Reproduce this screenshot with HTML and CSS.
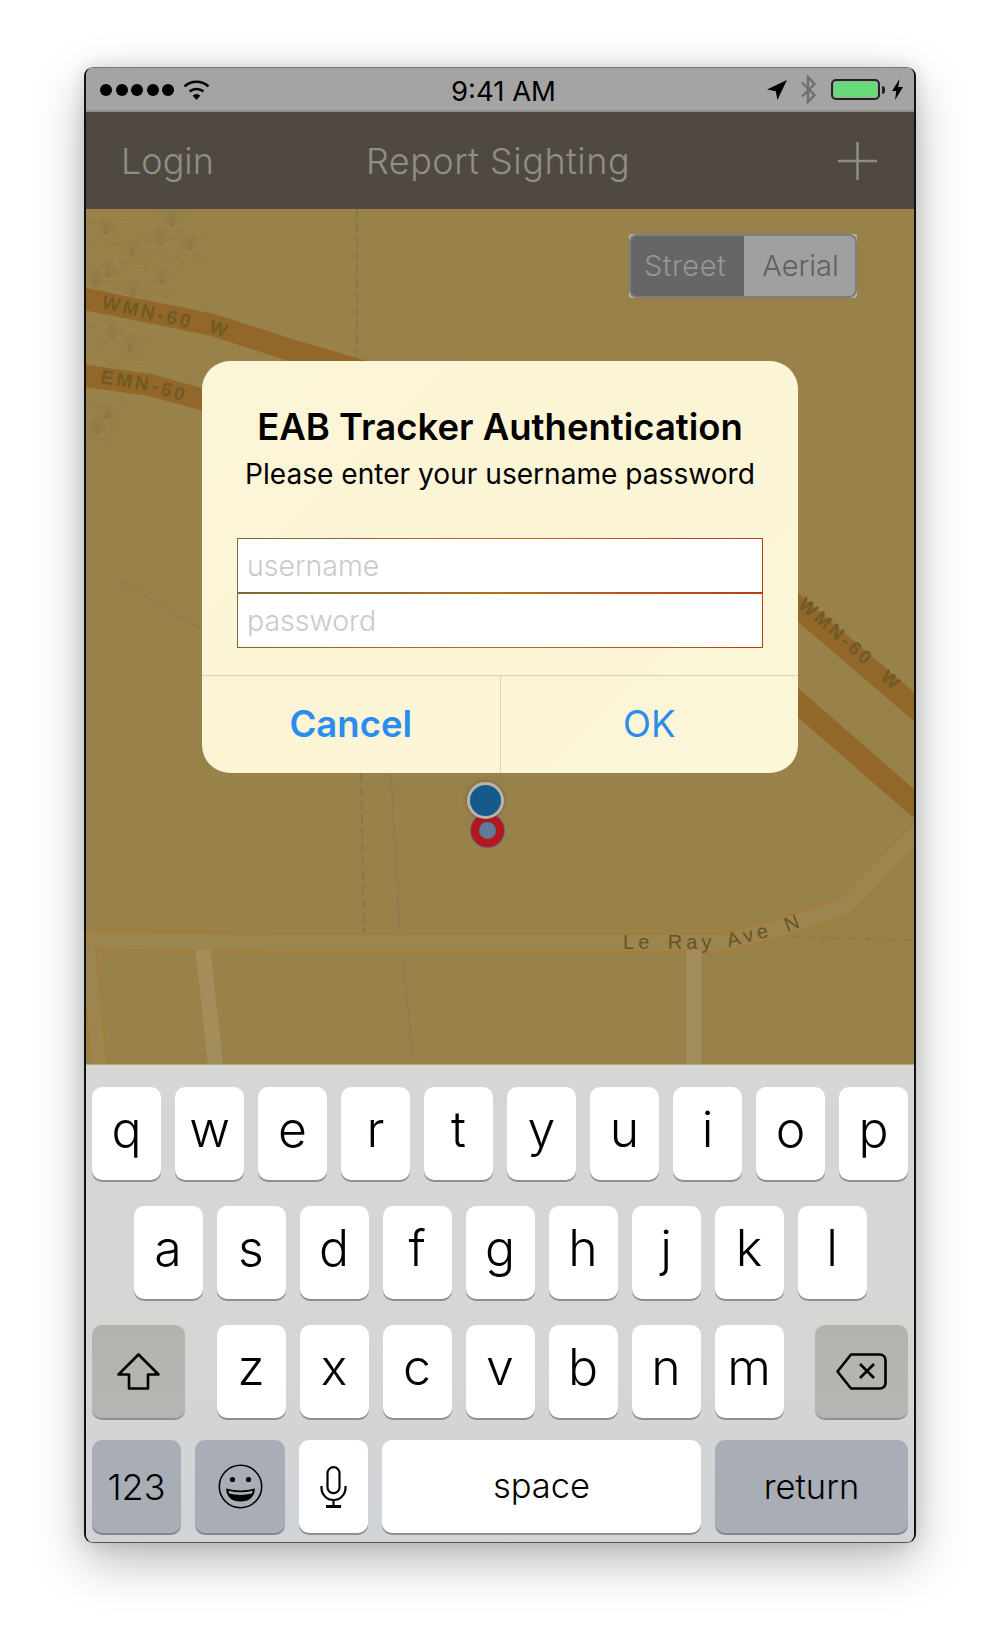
FILE: index.html
```html
<!DOCTYPE html>
<html lang="en">
<head>
<meta charset="utf-8">
<title>EAB Tracker</title>
<link rel="stylesheet" href="styles.css">
</head>
<body>
<div class="phone">
  <header class="status">
    <div class="status-left">
      <span class="signal"><i></i><i></i><i></i><i></i><i></i></span>
      <svg class="wifi" viewBox="0 0 27 20"><path d="M13.5 20 9.6 15.6a6 6 0 0 1 7.8 0Z" fill="#000"/><path d="M6.6 11.6a10.5 10.5 0 0 1 13.8 0" fill="none" stroke="#000" stroke-width="2.6"/><path d="M1.5 6.4a18 18 0 0 1 24 0" fill="none" stroke="#000" stroke-width="2.6"/></svg>
    </div>
    <div class="time">9:41 AM</div>
    <div class="status-right">
      <svg class="arrow" viewBox="0 0 20 20"><path d="M20 0 0 9.6l8.8 1.6L10.4 20Z" fill="#000"/></svg>
      <svg class="bt" viewBox="0 0 17 29"><path d="M2 7.5 14.5 20 8 27V2l6.500 7L2 21.500" fill="none" stroke="#6f6f6f" stroke-width="2.400"/></svg>
      <span class="battery"><span class="battery-fill"></span></span>
      <span class="nub"></span>
      <svg class="bolt" viewBox="0 0 11 21"><path d="M7.500 0 0 12h4.300L3 21l8-13H6.300Z" fill="#000"/></svg>
    </div>
  </header>

  <nav class="nav">
    <span class="nav-item login">Login</span>
    <span class="nav-item title">Report Sighting</span>
    <svg class="plus" viewBox="0 0 39 38"><path d="M19.500 0v38M0 19h39" stroke="#8f8e89" stroke-width="2.500" fill="none"/></svg>
  </nav>

  <main class="map">
    <svg class="map-art" viewBox="86 209 828 855">
      <defs>
        <g id="marsh" fill="none" stroke="#8a7544" stroke-width="0.8">
          <path d="M0 0-11-6M0 0-9-10M0 0-6-14M0 0-3-16M0 0V-18M0 0 3-16M0 0 6-14M0 0 9-10M0 0 11-6"/>
          <path d="M-14 5H14M-20 12H-4M3 12H19M-22-12H-13M13-14H22" stroke-dasharray="2 2"/>
        </g>
        <path id="p-wmn" d="M101 308 215 334 345 377"/>
        <path id="p-emn" d="M100 383 150 391 190 404"/>
        <path id="p-wmn2" d="M797 606 914 709"/>
        <path id="p-leray" d="M623 949H723L790 931 845 910"/>
      </defs>
      <rect class="ground" x="86" y="209" width="828" height="855"/>
      <use href="#marsh" x="106" y="234"/><use href="#marsh" x="172" y="226"/><use href="#marsh" x="160" y="245"/>
      <use href="#marsh" x="132" y="256"/><use href="#marsh" x="190" y="250"/><use href="#marsh" x="108" y="277"/>
      <use href="#marsh" x="162" y="284"/><use href="#marsh" x="133" y="296"/><use href="#marsh" x="96" y="286"/>
      <use href="#marsh" x="113" y="338"/><use href="#marsh" x="130" y="352"/><use href="#marsh" x="107" y="419"/>
      <use href="#marsh" x="97" y="434"/>
      <path class="dash" d="M357 209V355"/>
      <path class="dash" d="M361 773 364 933"/>
      <path class="grayline" d="M391 773 400 933 413 1058"/>
      <path class="dash faint" d="M120 581 200 628"/>
      <path class="dash road-dash" d="M792 937 914 940"/>
      <path class="road" d="M80 298 213 325 287 349 420 388"/>
      <path class="road" d="M80 375 150 385 215 403"/>
      <path class="road" d="M780 592 920 712"/>
      <path class="road" d="M780 687 920 809"/>
      <g class="minor">
        <path d="M86 940 280 943H723L790 925 845 906 920 830" class="edge"/>
        <path d="M86 940 280 943H723L790 925 845 906 920 830" class="fill"/>
        <path d="M203 950 216 1070" class="fill side"/>
        <path d="M694 950V1070" class="fill side"/>
        <path d="M88 948 100 1070" class="edge side-edge"/>
        <path d="M88 948 100 1070" class="fill side-thin"/>
      </g>
      <text class="label"><textPath href="#p-wmn">WMN-60&#160; W</textPath></text>
      <text class="label"><textPath href="#p-emn">EMN-60</textPath></text>
      <text class="label"><textPath href="#p-wmn2">WMN-60&#160; W</textPath></text>
      <text class="label street"><textPath href="#p-leray">Le Ray Ave N</textPath></text>
    </svg>

    <div class="segment">
      <span class="seg seg-on">Street</span>
      <span class="seg seg-off">Aerial</span>
    </div>

    <span class="pin-red"></span>
    <span class="pin-blue"></span>

    <section class="dialog">
      <div class="dialog-body">
        <h1 class="dialog-title">EAB Tracker Authentication</h1>
        <p class="dialog-text">Please enter your username password</p>
        <div class="fields">
          <input class="field" type="text" placeholder="username">
          <input class="field" type="password" placeholder="password">
        </div>
      </div>
      <div class="dialog-actions">
        <button class="action action-bold">Cancel</button>
        <button class="action">OK</button>
      </div>
    </section>
  </main>

  <section class="keyboard">
    <div class="row row-center">
      <span class="key">q</span><span class="key">w</span><span class="key">e</span><span class="key">r</span><span class="key">t</span><span class="key">y</span><span class="key">u</span><span class="key">i</span><span class="key">o</span><span class="key">p</span>
    </div>
    <div class="row row-center">
      <span class="key">a</span><span class="key">s</span><span class="key">d</span><span class="key">f</span><span class="key">g</span><span class="key">h</span><span class="key">j</span><span class="key">k</span><span class="key">l</span>
    </div>
    <div class="row row-split">
      <span class="key key-mod key-side">
        <svg class="icon-shift" viewBox="0 0 43 37"><path d="M21.500 1.500 1.500 21.500H12V35.500H31V21.500H41.500Z" fill="none" stroke="#000" stroke-width="2.600" stroke-linejoin="round"/></svg>
      </span>
      <div class="letters">
        <span class="key">z</span><span class="key">x</span><span class="key">c</span><span class="key">v</span><span class="key">b</span><span class="key">n</span><span class="key">m</span>
      </div>
      <span class="key key-mod key-side">
        <svg class="icon-delete" viewBox="0 0 51 37"><path d="M15 1.500H44a5.500 5.500 0 0 1 5.500 5.500V30a5.500 5.500 0 0 1-5.500 5.500H15L1.500 18.500Z" fill="none" stroke="#000" stroke-width="2.600" stroke-linejoin="round"/><path d="M24 11 38 25M38 11 24 25" fill="none" stroke="#000" stroke-width="2.600"/></svg>
      </span>
    </div>
    <div class="row row-bottom">
      <span class="key key-blue key-123">123</span>
      <span class="key key-blue key-emoji">
        <svg class="icon-emoji" viewBox="0 0 45 45"><circle cx="22.500" cy="22.500" r="21.200" fill="none" stroke="#000" stroke-width="1.600"/><circle cx="14.500" cy="15.500" r="2.600" fill="#000"/><circle cx="30.500" cy="15.500" r="2.600" fill="#000"/><path d="M8 24.500Q22.500 28.500 37 24.500 36 37.500 22.500 37.500 9 37.500 8 24.500Z" fill="#000"/><path d="M10.500 26.800Q22.500 29.800 34.500 26.800L34 29.500Q22.500 32.300 11 29.500Z" fill="#a9adb6"/></svg>
      </span>
      <span class="key key-mic">
        <svg class="icon-mic" viewBox="0 0 27 42"><rect x="7.500" y="1.200" width="12" height="26" rx="6" fill="none" stroke="#000" stroke-width="2.200"/><path d="M1.500 20v2a12 12 0 0 0 24 0v-2M13.500 34v6" fill="none" stroke="#000" stroke-width="2.200"/><path d="M6 40.500H21" stroke="#000" stroke-width="3"/></svg>
      </span>
      <span class="key key-space">space</span>
      <span class="key key-blue key-return">return</span>
    </div>
  </section>
</div>
</body>
</html>
```

FILE: styles.css
```css
* { box-sizing: border-box; }
html, body { margin: 0; background: #fff; }
body {
  width: 1000px;
  height: 1642px;
  padding: 67px 84px 0;
  font-family: Inter, "Liberation Sans", sans-serif;
  overflow: hidden;
}

.phone {
  width: 832px;
  height: 1476px;
  display: flex;
  flex-direction: column;
  border: solid #111;
  border-width: 1px 2px;
  border-top-color: #777;
  border-bottom-color: #555;
  border-radius: 9px;
  overflow: hidden;
  box-shadow: 0 18px 50px rgba(0,0,0,.28), 0 0 18px rgba(0,0,0,.12);
  background: #d6d6d4;
}

/* status bar */
.status {
  height: 44px;
  flex: none;
  position: relative;
  display: flex;
  justify-content: space-between;
  align-items: center;
  padding: 1px 11px 0 14px;
  background: #a4a4a4;
  border-bottom: 2px solid #8f8e8a;
}
.status-left, .status-right { display: flex; align-items: center; }
.signal { display: flex; gap: 3.500px; }
.signal i { width: 12px; height: 12px; border-radius: 50%; background: #000; }
.wifi { width: 27px; height: 20px; margin-left: 9px; }
.time {
  position: absolute;
  left: 0; right: 0; top: 1px;
  padding-left: 7px;
  text-align: center;
  font-size: 27.500px;
  line-height: 44px;
  font-weight: 400;
  color: #000;
}
.arrow { width: 20px; height: 20px; }
.bt { width: 17px; height: 29px; margin-left: 13px; }
.battery {
  width: 49px; height: 21px; margin-left: 14px;
  border: 2px solid #222; border-radius: 5px;
  padding: 1px; background: #a4a4a4;
}
.battery-fill { display: block; height: 100%; border-radius: 2px; background: #66d978; }
.nub { width: 3px; height: 8px; margin-left: 2px; background: #222; border-radius: 0 3px 3px 0; }
.bolt { width: 11px; height: 21px; margin-left: 7px; }

/* nav */
.nav {
  height: 97px;
  flex: none;
  display: flex;
  align-items: center;
  padding: 0 37px 0 35px;
  background: #504941;
  color: #8f8e89;
}
.nav-item { font-size: 36px; font-weight: 300; }
.title { margin-left: 152px; letter-spacing: .5px; }
.plus { width: 39px; height: 38px; margin-left: auto; }

/* map */
.map { height: 855px; flex: none; position: relative; background: #99814a; }
.map-art { display: block; width: 828px; height: 855px; }
.ground { fill: #99814a; }
.road { fill: none; stroke: #936729; stroke-width: 22; }
.dash { fill: none; stroke: #87734a; stroke-width: 1.500; stroke-dasharray: 9 5; }
.faint { opacity: .5; }
.road-dash { stroke: #8f7742; stroke-dasharray: 8 6; }
.grayline { fill: none; stroke: #8b7c56; stroke-width: 1.500; }
.edge { fill: none; stroke: #a87a36; stroke-width: 20; }
.fill { fill: none; stroke: #9c854f; stroke-width: 16.500; }
.side { stroke: #a38d5b; stroke-width: 15; }
.side-edge { stroke-width: 17; }
.side-thin { stroke-width: 14; }
.label {
  font-family: "Liberation Sans", sans-serif;
  font-size: 19px;
  font-weight: 700;
  letter-spacing: 3px;
  fill: #6f5a26;
}
.street { font-weight: 400; font-size: 20px; letter-spacing: 4px; word-spacing: 5px; fill: #665426; }

/* segmented control */
.segment {
  position: absolute;
  left: 543px; top: 25px;
  width: 228px; height: 64px;
  display: flex;
  background: #b9b6a8;
  border-radius: 3px;
}
.seg {
  flex: none;
  display: flex; align-items: center; justify-content: center;
  font-size: 29px; font-weight: 300;
  padding-bottom: 1px;
  border: 2px solid #7d7d7d;
}
.seg-on { width: 115px; background: #666; color: #979794; border-right: 0; border-radius: 8px 0 0 8px; letter-spacing: .5px; padding-right: 5px; }
.seg-off { width: 113px; background: #a0a0a0; color: #5e5e5e; border-left: 0; border-radius: 0 8px 8px 0; padding-left: 2px; }

/* pins */
.pin-blue {
  position: absolute;
  left: 381px; top: 573px;
  width: 37px; height: 37px;
  border-radius: 50%;
  background: #155a8a;
  border: 3px solid #b5b5ac;
  box-shadow: 0 0 4px rgba(60,50,20,.4);
}
.pin-red {
  position: absolute;
  left: 385px; top: 605px;
  width: 33px; height: 33px;
  border-radius: 50%;
  background: #5f7a9a;
  border: 8px solid #b3181c;
  box-shadow: 0 0 0 1px #6f5a8a;
}

/* dialog */
.dialog {
  position: absolute;
  left: 116px; top: 152px;
  width: 596px; height: 412px;
  display: flex;
  flex-direction: column;
  border-radius: 28px;
  background: linear-gradient(135deg, #fcf6d8, #fbf4d5 50%, #fcf6d9);
  overflow: hidden;
}
.dialog-body { flex: 1; padding: 43px 35px 0; text-align: center; }
.dialog-title { margin: 0; font-size: 36.500px; line-height: 46px; font-weight: 600; color: #000; }
.dialog-text { margin: 1px 0 0; font-size: 28.100px; line-height: 46px; font-weight: 400; color: #000; }
.fields {
  margin-top: 41px;
  display: flex;
  flex-direction: column;
}
.field {
  display: block;
  width: 100%;
  height: 55px;
  margin: 0;
  padding: 0 9px;
  background: #fff;
  border: 1px solid;
  border-image: linear-gradient(90deg, #7a6a30, #b0701e 50%, #bb3c16) 1;
  font-family: inherit;
  font-size: 28.500px;
  font-weight: 300;
  color: #000;
  outline: none;
}
.field::placeholder { color: #c9c9cf; opacity: 1; }
.dialog-actions { height: 98px; flex: none; display: flex; border-top: 1.500px solid #d9d4bb; }
.action {
  flex: 1;
  margin: 0; padding: 0 0 2px;
  background: none;
  border: 0;
  font-family: inherit;
  font-size: 36.500px;
  font-weight: 400;
  color: #2b8cf0;
}
.action + .action { border-left: 1.500px solid #d9d4bb; }
.action-bold { font-weight: 600; }

/* keyboard */
.keyboard {
  flex: 1;
  display: flex;
  flex-direction: column;
  gap: 26px;
  padding: 22px 6px 0;
  background: linear-gradient(180deg, #d6d6d4 50%, #d0d3d7);
  border-top: 1px solid #b7a980;
}
.row { display: flex; gap: 14px; }
.row-center { justify-content: center; }
.row-split { justify-content: space-between; gap: 0; }
.letters { display: flex; gap: 14px; }
.row-bottom { margin-top: -4px; }
.key {
  width: 69px; height: 93px;
  flex: none;
  display: flex; align-items: center; justify-content: center;
  padding-bottom: 9px;
  background: #fff;
  border-radius: 10px;
  box-shadow: 0 2px 0 #8f8f8f;
  font-size: 50px;
  font-weight: 300;
  color: #000;
}
.key-mod { background: linear-gradient(180deg, #b3b3ae, #b5b6b3); box-shadow: 0 2px 0 #8f8f8c; padding-bottom: 0; }
.key-side { width: 93px; }
.key-blue { background: #a9adb6; box-shadow: 0 2px 0 #85878d; font-size: 34.500px; padding-bottom: 0; }
.key-123 { width: 89px; font-size: 36px; }
.key-emoji { width: 90px; }
.key-mic { padding-bottom: 0; }
.key-space { width: 319px; font-size: 34.500px; padding-bottom: 3px; }
.key-return { width: 193px; }
.icon-shift { width: 43px; height: 37px; }
.icon-delete { width: 51px; height: 37px; }
.icon-emoji { width: 45px; height: 45px; }
.icon-mic { width: 27px; height: 42px; }
```
